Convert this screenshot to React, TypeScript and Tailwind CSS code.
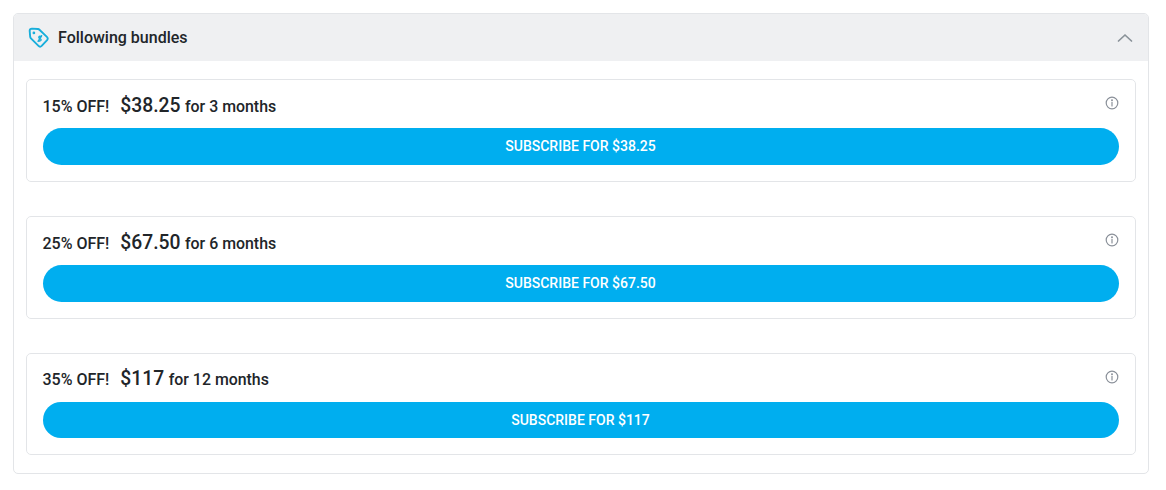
const bundles = [
  { off: "15% OFF!", price: "$38.25", term: "for 3 months", compact: false },
  { off: "25% OFF!", price: "$67.50", term: "for 6 months", compact: false },
  { off: "35% OFF!", price: "$117", term: "for 12 months", compact: true },
];

function TagIcon() {
  return (
    <svg width="21" height="21" viewBox="0 0 20 20" fill="none" stroke="#18aedb" strokeWidth="1.8" strokeLinejoin="round" strokeLinecap="round">
      <path d="M1.6 3.8 C1.5 2.4 2.4 1.5 3.8 1.5 L9.4 1.9 C10 2 10.5 2.2 10.9 2.6 L18 9.4 C19 10.4 19 11.5 18.2 12.5 L13 18 C12 19 10.9 19 10 18 L2.8 10.9 C2.4 10.5 2.2 10 2.1 9.4 Z" />
      <circle cx="5.6" cy="5.6" r="0.8" fill="#18aedb" strokeWidth="1" />
      <path strokeWidth="1.3" d="M12.8 9.2 C12 8.6 10.8 8.6 10.4 9.4 C10 10.2 10.8 10.8 11.4 11 C12.2 11.3 12.8 12 12.3 12.8 C11.8 13.5 10.6 13.4 9.9 12.8 M13 8.2 L9.6 13.8" />
    </svg>
  );
}

function InfoIcon() {
  return (
    <svg width="14" height="14" viewBox="0 0 14 14" fill="none" stroke="#8a9099" strokeWidth="1.2" strokeLinecap="round">
      <circle cx="7" cy="7" r="5.8" />
      <path d="M7 6.4 V10" />
      <circle cx="7" cy="4.2" r="0.4" fill="#8a9099" />
    </svg>
  );
}

function BundleCard({ off, price, term, compact }: { off: string; price: string; term: string; compact: boolean }) {
  return (
    <div className="rounded-[5px] border border-[#e3e5e8] bg-white px-4 pb-4 pt-[11px]">
      <div className="flex h-[37px] items-start justify-between">
        <div className={compact ? "mt-[1px] flex h-[26px] items-baseline text-[#212529]" : "mt-[2px] flex h-[26px] items-baseline text-[#212529]"}>
          <span className="-ml-[0.5px] text-[16px] font-medium leading-[26px]">{off}</span>
          <span className="ml-[11px] text-[19.3px] font-medium leading-[26px]">{price}</span>
          <span className="ml-[4.5px] text-[15.9px] font-medium leading-[26px]">{term}</span>
        </div>
        <div className="mt-[5px]">
          <InfoIcon />
        </div>
      </div>
      <button
        type="button"
        className={
          compact
            ? "flex h-[36px] w-full items-center justify-center rounded-full bg-[#00aeef] pr-[1px] text-[14px] font-medium text-white"
            : "flex h-[37px] w-full items-center justify-center rounded-full bg-[#00aeef] pr-[1px] text-[14px] font-medium text-white"
        }
      >
        SUBSCRIBE FOR {price}
      </button>
    </div>
  );
}

export default function App() {
  return (
    <div className="h-[490px] w-[1166px] bg-white p-[13px] font-['Roboto',sans-serif]">
      <div className="h-[461px] w-[1136px] overflow-hidden rounded-[5px] border border-[#e3e5e8]">
        <div className="flex h-[47px] items-center justify-between bg-[#eff0f2] px-[14px]">
          <div className="flex items-center gap-[9px]">
            <TagIcon />
            <span className="text-[16px] font-medium text-[#212529]">Following bundles</span>
          </div>
          <svg width="18" height="18" viewBox="0 0 18 18" fill="none" stroke="#8a9299" strokeWidth="1.7" strokeLinecap="round" strokeLinejoin="round">
            <path d="M2.5 12 L9 6 L15.5 12" />
          </svg>
        </div>
        <div className="flex flex-col gap-[34px] px-3 pt-[18px]">
          {bundles.map((b) => (
            <BundleCard key={b.off} {...b} />
          ))}
        </div>
      </div>
    </div>
  );
}
